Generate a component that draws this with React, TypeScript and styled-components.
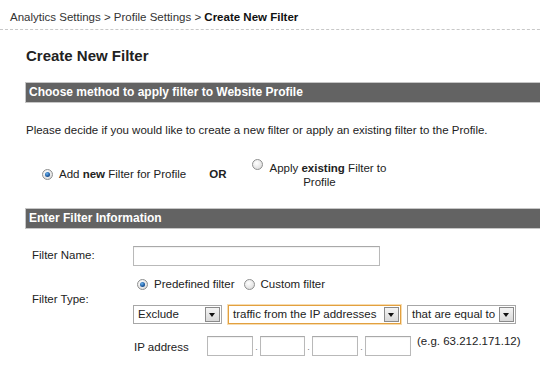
import styled, { createGlobalStyle, css } from "styled-components";

const GlobalStyle = createGlobalStyle`
  html, body {
    margin: 0;
    padding: 0;
    background: #fff;
    overflow: hidden;
  }
  body {
    font-family: "Liberation Sans", Arial, sans-serif;
    font-size: 11.5px;
    color: #222;
  }
`;

function App() {
  return (
    <>
      <GlobalStyle />
      <Page>
        <Breadcrumb>
          Analytics Settings &gt; Profile Settings &gt; <Current>Create New Filter</Current>
        </Breadcrumb>
        <Main>
          <Title>Create New Filter</Title>
          <SectionBar>Choose method to apply filter to Website Profile</SectionBar>
          <Intro>
            Please decide if you would like to create a new filter or apply an existing filter to the Profile.
          </Intro>
          <MethodRow>
            <Choice>
              <Radio $checked />
              <span>
                Add <b>new</b> Filter for Profile
              </span>
            </Choice>
            <Or>OR</Or>
            <WrapChoice>
              <Radio $inline />
              Apply <b>existing</b> Filter to Profile
            </WrapChoice>
          </MethodRow>

          <SectionBar $gap={19}>Enter Filter Information</SectionBar>
          <Form>
            <FieldRow>
              <Label>Filter Name:</Label>
              <TextInput $width={247} />
            </FieldRow>
            <FieldRow $gap={11}>
              <Label>Filter Type:</Label>
              <Stack>
                <RadioGroup>
                  <Choice>
                    <Radio $checked />
                    <span>Predefined filter</span>
                  </Choice>
                  <Choice>
                    <Radio />
                    <span>Custom filter</span>
                  </Choice>
                </RadioGroup>
                <SelectRow>
                  <Select $width={89}>
                    Exclude
                    <Arrow />
                  </Select>
                  <Select $width={173} $focused>
                    traffic from the IP addresses
                    <Arrow />
                  </Select>
                  <Select $width={109}>
                    that are equal to
                    <Arrow />
                  </Select>
                </SelectRow>
              </Stack>
            </FieldRow>
            <FieldRow $gap={12}>
              <Label />
              <IpLabel>IP address</IpLabel>
              <IpGroup>
                <TextInput $width={46} />
                <Dot>.</Dot>
                <TextInput $width={45} />
                <Dot>.</Dot>
                <TextInput $width={46} />
                <Dot>.</Dot>
                <TextInput $width={46} />
              </IpGroup>
              <Hint>(e.g. 63.212.171.12)</Hint>
            </FieldRow>
          </Form>
        </Main>
      </Page>
    </>
  );
}

const Page = styled.div`
  width: 560px;
`;

const Breadcrumb = styled.div`
  box-sizing: border-box;
  height: 30px;
  padding: 10px 0 0 10px;
  line-height: 14px;
  color: #333;
  border-bottom: 1px dashed #c8c8c8;
`;

const Current = styled.b`
  color: #111;
`;

const Main = styled.div`
  padding-left: 25px;
`;

const Title = styled.h1`
  margin: 16px 0 0 1px;
  font-size: 15px;
  line-height: 20px;
  font-weight: bold;
  color: #222;
`;

const SectionBar = styled.div<{ $gap?: number }>`
  margin-top: ${(p) => p.$gap ?? 16}px;
  height: 19px;
  line-height: 19px;
  padding-left: 3px;
  background: #636363;
  border: 1px solid #c6c6c6;
  color: #fff;
  font-size: 12px;
  font-weight: bold;
`;

const Intro = styled.p`
  margin: 20px 0 0 1px;
  line-height: 14px;
`;

const MethodRow = styled.div`
  display: flex;
  align-items: center;
  margin-top: 22px;
  padding-left: 17px;
  line-height: 14px;
`;

const Choice = styled.label`
  display: flex;
  align-items: center;
  gap: 6px;
  white-space: nowrap;
`;

const Or = styled.b`
  margin-left: 23px;
`;

const WrapChoice = styled.label`
  width: 142px;
  margin-left: 22px;
  text-align: center;
  line-height: 14px;
`;

const Radio = styled.span<{ $checked?: boolean; $inline?: boolean }>`
  display: inline-block;
  position: relative;
  box-sizing: border-box;
  width: 11px;
  height: 11px;
  border-radius: 50%;
  border: 1px solid #8e8f8f;
  background: radial-gradient(circle at 40% 35%, #ffffff 0%, #e6e6e6 60%, #cfcfcf 100%);
  vertical-align: -1px;
  flex: none;
  ${(p) =>
    p.$inline &&
    css`
      margin-right: 6px;
      vertical-align: 2px;
    `}
  ${(p) =>
    p.$checked &&
    css`
      &::after {
        content: "";
        position: absolute;
        left: 2px;
        top: 2px;
        width: 5px;
        height: 5px;
        border-radius: 50%;
        background: radial-gradient(circle at 40% 35%, #6fb6f0 0%, #1f5da3 55%, #0d2f5c 100%);
      }
    `}
`;

const Form = styled.div`
  margin-top: 17px;
  padding-left: 7px;
`;

const FieldRow = styled.div<{ $gap?: number }>`
  display: flex;
  align-items: center;
  margin-top: ${(p) => p.$gap ?? 0}px;
`;

const Label = styled.div`
  width: 101px;
  flex: none;
  line-height: 14px;
  margin-top: -3px;
`;

const TextInput = styled.div<{ $width: number }>`
  box-sizing: border-box;
  width: ${(p) => p.$width}px;
  height: 20px;
  background: #fff;
  border: 1px solid #b9b9b9;
  border-top-color: #a9a9a9;
  box-shadow: inset 0 1px 1px rgba(0, 0, 0, 0.06);
`;

const Stack = styled.div`
  display: flex;
  flex-direction: column;
  gap: 14px;
`;

const RadioGroup = styled.div`
  display: flex;
  align-items: center;
  gap: 9px;
  padding-left: 4px;
  line-height: 14px;
`;

const SelectRow = styled.div`
  display: flex;
  gap: 6px;
`;

const Select = styled.div<{ $width: number; $focused?: boolean }>`
  position: relative;
  box-sizing: border-box;
  width: ${(p) => p.$width}px;
  height: 19px;
  padding-left: 4px;
  line-height: 17px;
  white-space: nowrap;
  overflow: hidden;
  background: #fff;
  border: 1px solid #a7a7a7;
  ${(p) =>
    p.$focused &&
    css`
      border-color: #e2a03f;
      box-shadow: 0 0 0 1px #f7dcb0;
    `}
`;

const Arrow = styled.span`
  position: absolute;
  right: 1px;
  top: 1px;
  box-sizing: border-box;
  width: 15px;
  height: 15px;
  border: 1px solid #8a8a8a;
  background: linear-gradient(#f4f4f4, #d9d9d9);
  &::after {
    content: "";
    position: absolute;
    left: 3px;
    top: 5px;
    border-left: 3.5px solid transparent;
    border-right: 3.5px solid transparent;
    border-top: 4px solid #111;
  }
`;

const IpLabel = styled.div`
  width: 73px;
  margin-left: 1px;
  line-height: 14px;
  margin-top: 1px;
`;

const IpGroup = styled.div`
  display: flex;
  align-items: center;
`;

const Dot = styled.span`
  width: 7px;
  text-align: center;
  font-size: 9px;
  color: #777;
  line-height: 9px;
  margin-top: 3px;
`;

const Hint = styled.div`
  align-self: flex-start;
  margin-left: 6px;
  line-height: 14px;
  margin-top: -2px;
`;

export default App;
